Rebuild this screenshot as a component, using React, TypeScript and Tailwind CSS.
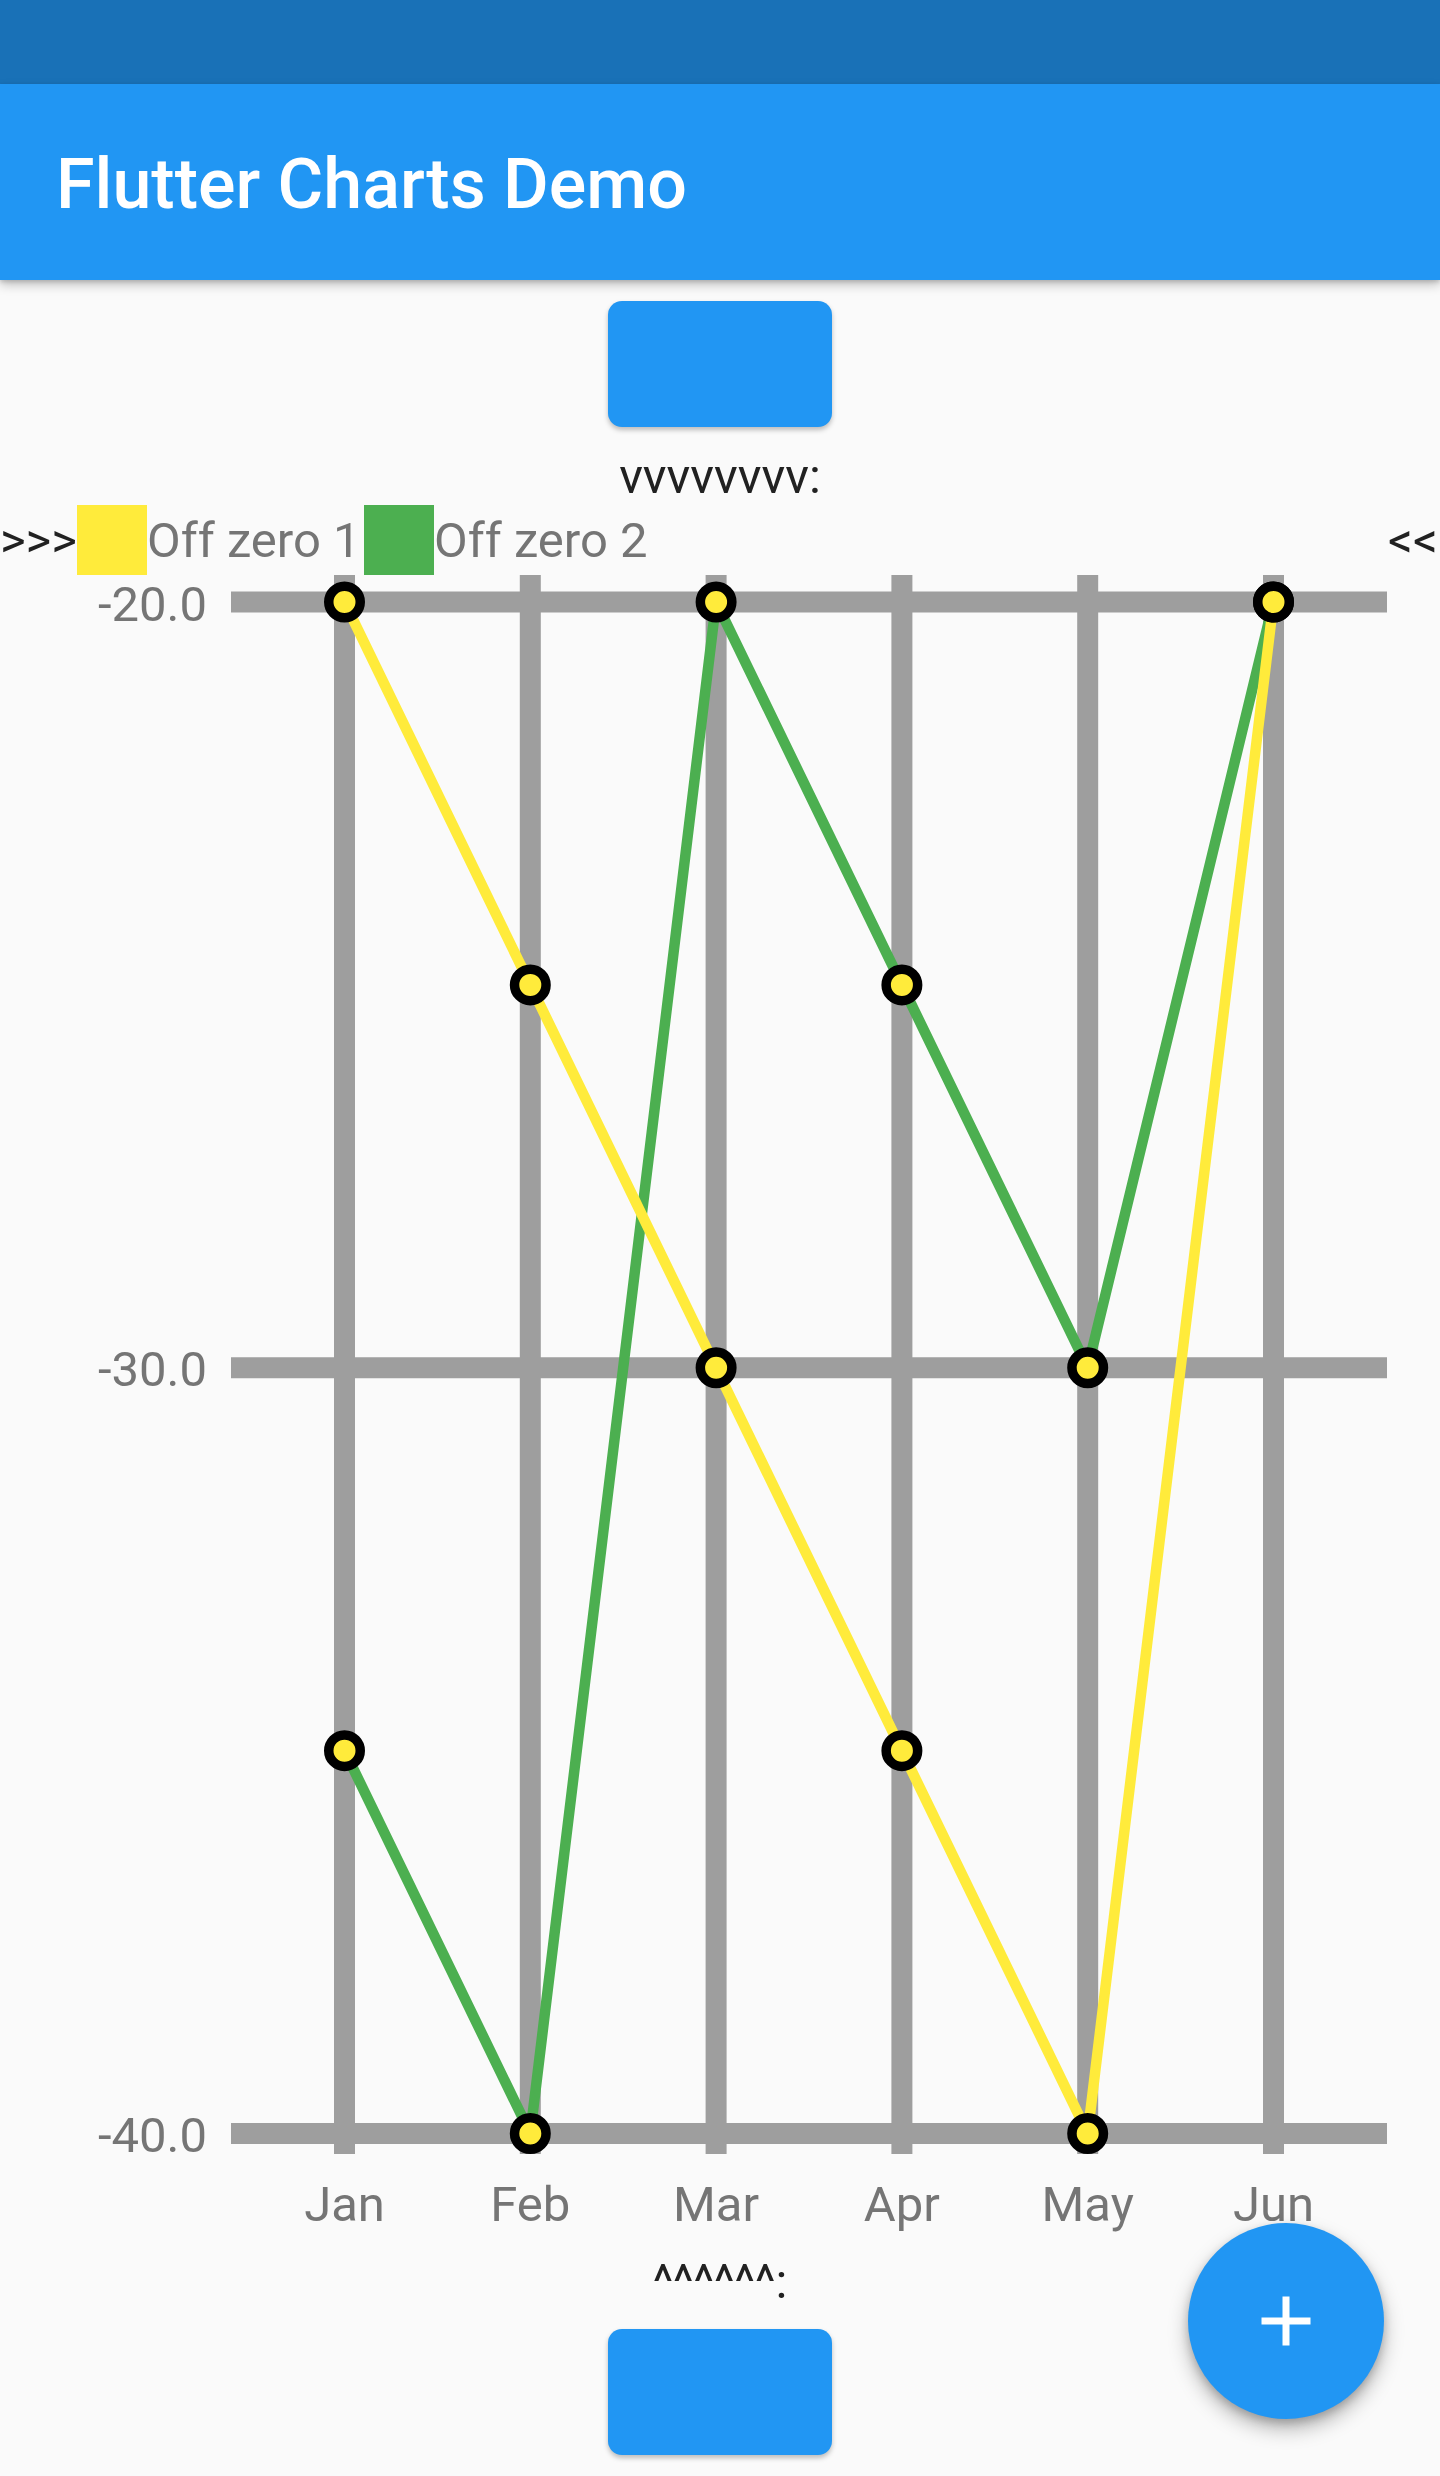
import React from "react";

const XS = [344.5, 530.3, 716.1, 901.9, 1087.7, 1273.5];
const MONTHS = ["Jan", "Feb", "Mar", "Apr", "May", "Jun"];
const S1 = [-20, -25, -30, -35, -40, -20];
const S2 = [-35, -40, -20, -25, -30, -20];
const yOf = (v: number) => 27 + (-20 - v) * 76.575;
const pts = (s: number[]) => s.map((v, i) => `${XS[i]},${yOf(v)}`).join(" ");

function Chart() {
  const ticks = [-20, -30, -40];
  return (
    <svg width="1440" height="1678" viewBox="0 0 1440 1678" className="block">
      {XS.map((x) => (
        <line key={x} x1={x} x2={x} y1={0} y2={1579} stroke="#9E9E9E" strokeWidth={21} />
      ))}
      {ticks.map((t) => (
        <line key={t} x1={231} x2={1387} y1={yOf(t)} y2={yOf(t)} stroke="#9E9E9E" strokeWidth={21} />
      ))}
      {ticks.map((t) => (
        <text
          key={"l" + t}
          x={207}
          y={yOf(t) + 18.5}
          textAnchor="end"
          fontFamily="Roboto, sans-serif"
          fontSize={49}
          fill="#757575"
        >
          {t.toFixed(1)}
        </text>
      ))}
      {MONTHS.map((m, i) => (
        <text
          key={m}
          x={XS[i]}
          y={1646}
          textAnchor="middle"
          fontFamily="Roboto, sans-serif"
          fontSize={49}
          fill="#757575"
        >
          {m}
        </text>
      ))}
      <polyline points={pts(S2)} fill="none" stroke="#4CAF50" strokeWidth={10.5} strokeLinejoin="round" />
      <polyline points={pts(S1)} fill="none" stroke="#FFEB3B" strokeWidth={10.5} strokeLinejoin="round" />
      {[...S2, ...S1].map((v, k) => (
        <circle
          key={k}
          cx={XS[k % 6]}
          cy={yOf(v)}
          r={15.75}
          fill="#FFEB3B"
          stroke="#000000"
          strokeWidth={9.5}
        />
      ))}
    </svg>
  );
}

export default function App() {
  return (
    <div className="relative w-[1440px] h-[2476px] overflow-hidden bg-[#FAFAFA] font-['Roboto',sans-serif]">
      <div className="h-[84px] bg-[#1971B7]" />
      <div className="relative z-10 flex h-[196px] items-center bg-[#2196F3] pl-[56px] pt-[3px] shadow-[0_5px_10px_rgba(0,0,0,0.22),0_2px_4px_rgba(0,0,0,0.14)]">
        <span className="text-[70px] font-medium leading-[82px] text-white">Flutter Charts Demo</span>
      </div>
      <div className="flex flex-col items-center">
        <div className="py-[21px]">
          <div className="h-[126px] w-[224px] rounded-[14px] bg-[#2196F3] shadow-[0_3px_5px_rgba(0,0,0,0.25)]" />
        </div>
        <div className="text-[49px] leading-[57px] text-[#212121]">vvvvvvvv:</div>
        <div className="flex h-[70px] w-full items-center whitespace-nowrap text-[49px] leading-[57px]">
          <span className="w-[77px] text-[#212121]">&gt;&gt;&gt;</span>
          <span className="h-[70px] w-[70px] bg-[#FFEB3B]" />
          <span className="w-[217px] text-[#757575]">Off zero 1</span>
          <span className="h-[70px] w-[70px] bg-[#4CAF50]" />
          <span className="text-[#757575]">Off zero 2</span>
          <span className="ml-auto w-[52px] text-[#212121]">&lt;&lt;</span>
        </div>
        <Chart />
        <div className="text-[49px] leading-[57px] text-[#212121]">^^^^^^:</div>
        <div className="pt-[19px]">
          <div className="h-[126px] w-[224px] rounded-[14px] bg-[#2196F3] shadow-[0_3px_5px_rgba(0,0,0,0.25)]" />
        </div>
      </div>
      <button className="absolute right-[56px] bottom-[57px] flex h-[196px] w-[196px] items-center justify-center rounded-full bg-[#2196F3] shadow-[0_10px_20px_rgba(0,0,0,0.28),0_4px_8px_rgba(0,0,0,0.18)]">
        <svg width="84" height="84" viewBox="0 0 24 24" fill="#FFFFFF">
          <path d="M19 13h-6v6h-2v-6H5v-2h6V5h2v6h6v2z" />
        </svg>
      </button>
    </div>
  );
}
